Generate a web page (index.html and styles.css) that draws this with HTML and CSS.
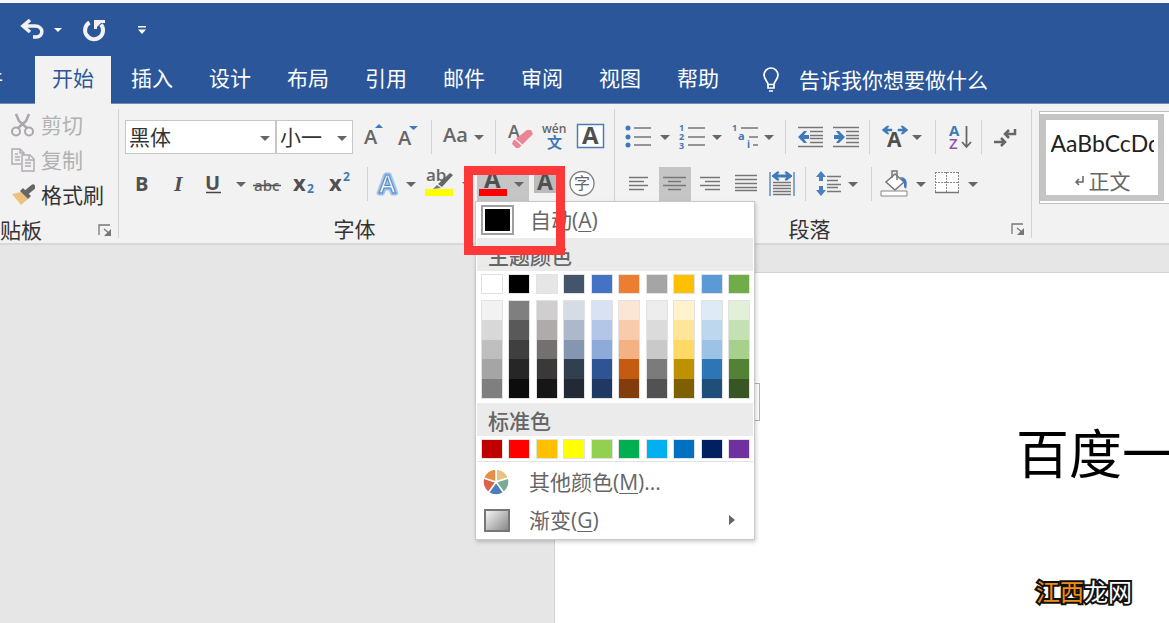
FILE: index.html
```html
<!DOCTYPE html>
<html lang="zh-CN">
<head>
<meta charset="utf-8">
<title>Word</title>
<link rel="stylesheet" href="styles.css">
</head>
<body>
<div class="app">
  <header class="titlebar">
    <button class="qat w40" aria-label="撤消"><svg width="28" height="24" viewBox="0 0 28 24"><path d="M12 2 5 8l7 6M5 8h12c9 0 9 11 1 11h-3" fill="none" stroke="#f2f2f2" stroke-width="3.500"/></svg></button>
    <button class="qat w12" aria-label="撤消列表"><i class="caret"></i></button>
    <button class="qat qat-redo w36" aria-label="重复"><svg width="26" height="26" viewBox="0 0 26 26"><path d="M8.500 5.500a9 9 0 1 0 11.500 2" fill="none" stroke="#f2f2f2" stroke-width="4"/><path d="M13 3h11v3h-4l-4 4v2h-3z" fill="#f2f2f2"/></svg></button>
    <button class="qat qat-more w20" aria-label="自定义"><svg width="10" height="10" viewBox="0 0 10 10"><path d="M1 1h8v1.500H1zM1 4.500h8L5 9z" fill="#fff"/></svg></button>
  </header>
  <nav class="tabs">
    <button class="tab tab-file">文件</button>
    <button class="tab tab-active">开始</button>
    <button class="tab">插入</button>
    <button class="tab">设计</button>
    <button class="tab">布局</button>
    <button class="tab">引用</button>
    <button class="tab">邮件</button>
    <button class="tab">审阅</button>
    <button class="tab">视图</button>
    <button class="tab">帮助</button>
    <button class="tell"><svg width="22" height="28" viewBox="0 0 22 28" fill="none" stroke="#fff" stroke-width="1.700"><path d="M8 18.500c0-3-4-5-4-9.500a7 7 0 0 1 14 0c0 4.500-4 6.500-4 9.500zM8 18v4h6v-4M9 25h4"/></svg>告诉我你想要做什么</button>
  </nav>

  <main class="ribbon">
    <section class="group group-clip">
      <div class="clip-list">
        <button class="clip off"><svg width="24" height="24" viewBox="0 0 24 24" fill="none" stroke="#aaa6aa" stroke-width="2"><circle cx="5" cy="18.500" r="4"/><circle cx="18" cy="18.500" r="4"/><path d="M5 1l3 7 8 7M18 1l-3 7-8 7" stroke-width="2.500"/></svg>剪切</button>
        <button class="clip off"><svg width="24" height="24" viewBox="0 0 24 24" fill="none" stroke="#b3acb3" stroke-width="1.500"><path d="M10 16H1V1h8l4 4v2M9 1v4h4M4 6h3M4 9h5M4 12h5"/><path d="M11 7h8l4 4v12H11zM18 7v5h5M14 12h3M14 15h6M14 18h6" fill="#f2f2f2"/></svg>复制</button>
        <button class="clip"><svg width="24" height="24" viewBox="0 0 24 24"><path d="M1 11l9-2 7 7-7 6z" fill="#ebc27f"/><path d="M9 8l3-3 8 8-3 3z" fill="#666"/><path d="M16 9l6-5" stroke="#666" stroke-width="5" stroke-linecap="round"/></svg>格式刷</button>
      </div>
      <div class="caption"><span class="caption-clip">贴板</span><button class="launch" aria-label="剪贴板设置"><svg width="14" height="12" viewBox="0 0 14 12"><path d="M1 11V1h11M6 5l6 5" fill="none" stroke="#777" stroke-width="1.300"/><path d="M13 5v7H6z" fill="#777"/></svg></button></div>
    </section>

    <section class="group group-font">
      <div class="row">
        <span class="combo combo-font"><select aria-label="字体"><option>黑体</option></select></span>
        <span class="combo combo-size"><select aria-label="字号"><option>小一</option></select></span>
        <button class="tool w36" aria-label="增大字号"><svg width="36" height="34"><text x="11" y="24" class="g" font-size="20">A</text><path d="M22 8h8l-4-4z" fill="#3f79b7"/></svg></button>
        <button class="tool w36" aria-label="减小字号"><svg width="36" height="34"><text x="9" y="25" class="g" font-size="20">A</text><path d="M20 6h9l-4.500 4z" fill="#3f79b7"/></svg></button>
        <span class="sep w12"></span>
        <button class="tool w32" aria-label="更改大小写"><svg width="32" height="34"><text x="6" y="22" class="g" font-size="20">Aa</text></svg></button>
        <button class="tool w20" aria-label="大小写选项"><i class="caret"></i></button>
        <span class="sep w12"></span>
        <button class="tool w36" aria-label="清除格式"><svg width="36" height="34"><text x="7" y="18" class="g" font-size="18">A</text><path d="M12 21 26 10h4l2 4-14 14h-3l-4-4z" fill="#e98594"/><path d="M14 19l7 6" stroke="#f2f2f2" stroke-width="1.500"/></svg></button>
        <button class="tool w36" aria-label="拼音指南"><svg width="36" height="34"><text x="5" y="13" class="g" font-size="12">wén</text><text x="10" y="28" class="cjk" font-size="15" font-weight="bold" fill="#3f79b7">文</text></svg></button>
        <button class="tool w32" aria-label="字符边框"><svg width="32" height="34"><path d="M4.500 4.500h26v23h-26z" fill="#fff" stroke="#4d7db3" stroke-width="1.500"/><text x="9" y="24" class="b" font-size="24">A</text></svg></button>
      </div>
      <div class="row">
        <button class="tool w32" aria-label="加粗"><svg width="32" height="34"><text x="10" y="24" class="b" font-size="20">B</text></svg></button>
        <button class="tool w40" aria-label="倾斜"><svg width="40" height="34"><text x="17" y="24" class="italic" font-size="22">I</text></svg></button>
        <button class="tool w32" aria-label="下划线"><svg width="32" height="34"><text x="8" y="23" class="b" font-size="20">U</text><path d="M9 25.500h15" stroke="#444" stroke-width="1.500"/></svg></button>
        <button class="tool w24" aria-label="下划线选项"><i class="caret"></i></button>
        <button class="tool w28" aria-label="删除线"><svg width="28" height="34"><text x="1" y="24" class="g" font-size="15">abc</text><path d="M0 18.500h28" stroke="#555" stroke-width="1.500"/></svg></button>
        <button class="tool w40" aria-label="下标"><svg width="40" height="34"><text x="12" y="24" class="b" font-size="22">x</text><text x="26" y="26" class="blue" font-size="12">2</text></svg></button>
        <button class="tool w36" aria-label="上标"><svg width="36" height="34"><text x="8" y="24" class="b" font-size="22">x</text><text x="22" y="14" class="blue" font-size="12">2</text></svg></button>
        <span class="sep w20"></span>
        <button class="tool w24" aria-label="文本效果"><svg width="24" height="34"><text x="2" y="26" font-size="25" font-weight="600" class="glow">A</text><text x="2" y="26" font-size="25" font-weight="600" class="fx">A</text></svg></button>
        <button class="tool w20" aria-label="文本效果选项"><i class="caret"></i></button>
        <button class="tool w36" aria-label="突出显示"><svg width="36" height="34"><text x="5" y="14" class="g" font-size="17">ab</text><path d="M29 6l3 2-11 12-4-3z" fill="#666"/><path d="M16 18l4 3-8 1z" fill="#777"/><path d="M4 22h28v7H4z" fill="#ff0"/></svg></button>
        <button class="tool w20" aria-label="突出显示选项"><i class="caret"></i></button>
        <div class="picker">
          <button class="tool on w32" aria-label="字体颜色"><svg width="32" height="34"><text x="7" y="21" class="b" font-size="24">A</text><path d="M2 22h28v7H2z" fill="#f00"/></svg></button>
          <button class="tool on w20" aria-label="字体颜色选项"><i class="caret"></i></button>

          <div class="menu">
            <button class="menu-item item-auto"><i class="auto-chip"></i><span>自动(<u>A</u>)</span></button>
            <h2 class="menu-head">主题颜色</h2>
            <div class="swatches">
              <i style="background:#fff"></i><i style="background:#000"></i><i style="background:#e7e6e6"></i><i style="background:#44546a"></i><i style="background:#4472c4"></i><i style="background:#ed7d31"></i><i style="background:#a5a5a5"></i><i style="background:#ffc000"></i><i style="background:#5b9bd5"></i><i style="background:#70ad47"></i>
            </div>
            <div class="tints">
              <div><i style="background:#f2f2f2"></i><i style="background:#d8d8d8"></i><i style="background:#bfbfbf"></i><i style="background:#a5a5a5"></i><i style="background:#7f7f7f"></i></div>
              <div><i style="background:#7f7f7f"></i><i style="background:#595959"></i><i style="background:#3f3f3f"></i><i style="background:#262626"></i><i style="background:#0c0c0c"></i></div>
              <div><i style="background:#d0cece"></i><i style="background:#aeabaa"></i><i style="background:#757070"></i><i style="background:#3a3838"></i><i style="background:#171616"></i></div>
              <div><i style="background:#d6dce4"></i><i style="background:#adb9ca"></i><i style="background:#8496b0"></i><i style="background:#323f4f"></i><i style="background:#222a35"></i></div>
              <div><i style="background:#d9e2f3"></i><i style="background:#b4c6e7"></i><i style="background:#8eaadb"></i><i style="background:#2f5496"></i><i style="background:#1f3864"></i></div>
              <div><i style="background:#fbe5d5"></i><i style="background:#f7cbac"></i><i style="background:#f4b183"></i><i style="background:#c55a11"></i><i style="background:#833c0b"></i></div>
              <div><i style="background:#ededed"></i><i style="background:#dbdbdb"></i><i style="background:#c9c9c9"></i><i style="background:#7b7b7b"></i><i style="background:#525252"></i></div>
              <div><i style="background:#fff2cc"></i><i style="background:#fee599"></i><i style="background:#ffd965"></i><i style="background:#bf9000"></i><i style="background:#7f6000"></i></div>
              <div><i style="background:#deebf6"></i><i style="background:#bdd7ee"></i><i style="background:#9cc3e5"></i><i style="background:#2e75b5"></i><i style="background:#1e4e79"></i></div>
              <div><i style="background:#e2efd9"></i><i style="background:#c5e0b3"></i><i style="background:#a8d08d"></i><i style="background:#538135"></i><i style="background:#375623"></i></div>
            </div>
            <h2 class="menu-head">标准色</h2>
            <div class="swatches">
              <i style="background:#c00000"></i><i style="background:#f00"></i><i style="background:#ffc000"></i><i style="background:#ff0"></i><i style="background:#92d050"></i><i style="background:#00b050"></i><i style="background:#00b0f0"></i><i style="background:#0070c0"></i><i style="background:#002060"></i><i style="background:#7030a0"></i>
            </div>
            <button class="menu-item item-more"><svg width="28" height="26" viewBox="0 0 28 26" stroke="#fff" stroke-width="1.500"><path d="M13 13V0a13 13 0 0 1 12.400 9z" fill="#e9c384"/><path d="M13 13l12.400-4a13 13 0 0 1-4.800 14.500z" fill="#7aa996"/><path d="M13 13l7.600 10.500a13 13 0 0 1-15.200 0z" fill="#4a7fbb"/><path d="M13 13 5.400 23.500A13 13 0 0 1 .6 9z" fill="#dc6247"/><path d="M13 13 .6 9A13 13 0 0 1 13 0z" fill="#e58f48"/></svg><span>其他颜色(<u>M</u>)...</span></button>
            <button class="menu-item item-more"><i class="grad-chip"></i><span>渐变(<u>G</u>)</span><i class="sub-arrow"></i></button>
          </div>
          <div class="marker"></div>
        </div>
        <button class="tool w32" aria-label="字符底纹"><svg width="32" height="34"><path d="M5 7h25v19H5z" fill="#bbb"/><text x="8" y="23" class="b" font-size="23">A</text></svg></button>
        <button class="tool w40" aria-label="带圈字符"><svg width="40" height="34"><circle cx="21" cy="16.500" r="12" fill="#fff" stroke="#808080" stroke-width="1.300"/><text x="13" y="22" class="cjk" font-size="16" fill="#666">字</text></svg></button>
      </div>
      <div class="caption"><span>字体</span><button class="launch" aria-label="字体设置"></button></div>
    </section>

    <section class="group group-para">
      <div class="row">
        <button class="tool w40" aria-label="项目符号"><svg width="40" height="34"><g fill="#3f79b7"><circle cx="9" cy="8" r="2.500"/><circle cx="9" cy="17" r="2.500"/><circle cx="9" cy="25" r="2.500"/></g><path d="M15 8h17M15 17h17M15 25h17" class="ln"/></svg></button>
        <button class="tool w12" aria-label="项目符号选项"><i class="caret"></i></button>
        <button class="tool w40" aria-label="编号"><svg width="40" height="34"><g class="blue" font-size="9"><text x="8" y="11">1</text><text x="8" y="20">2</text><text x="8" y="29">3</text></g><path d="M17 8h17M17 17h17M17 25h17" class="ln"/></svg></button>
        <button class="tool w12" aria-label="编号选项"><i class="caret"></i></button>
        <button class="tool w40" aria-label="多级列表"><svg width="40" height="34"><g class="blue"><text x="9" y="11" font-size="9">1</text><text x="15" y="20" font-size="11">a</text><text x="24" y="28" font-size="10">i</text></g><path d="M18 8h17M26 17h9M30 25h5" class="ln"/></svg></button>
        <button class="tool w12" aria-label="多级列表选项"><i class="caret"></i></button>
        <span class="sep w20"></span>
        <button class="tool w32" aria-label="减少缩进"><svg width="32" height="34"><path d="M3 7.500h25M15 11.500h13M15 15.500h13M15 18.500h13M15 22.500h13M3 26.500h25" class="ln"/><path d="M3 17l6-6h3l-3 4h5v4H9l3 4H9z" fill="#3f79b7"/></svg></button>
        <button class="tool w36" aria-label="增加缩进"><svg width="36" height="34"><path d="M6 7.500h26M19 11.500h13M19 15.500h13M19 18.500h13M19 22.500h13M6 26.500h26" class="ln"/><path d="M18 17l-6-6H9l3 4H7v4h5l-3 4h3z" fill="#3f79b7"/></svg></button>
        <span class="sep w12"></span>
        <button class="tool w36" aria-label="中文版式"><svg width="36" height="34"><path d="M7 10l5-4h2l-2 3h5v2h-5l2 3h-2zM33 10l-5-4h-2l2 3h-5v2h5l-2 3h2z" fill="#3f79b7" stroke="#3f79b7" stroke-width=".5"/><text x="12" y="27" class="b" font-size="21">A</text></svg></button>
        <button class="tool w12" aria-label="中文版式选项"><i class="caret"></i></button>
        <span class="sep w24"></span>
        <button class="tool w28" aria-label="排序"><svg width="28" height="34"><text x="2" y="16" class="blue" font-size="15">A</text><text x="2" y="29" font-size="15" font-weight="600" fill="#9052ad" class="latin">Z</text><path d="M19.500 6v20M15 22l4.500 5 4.500-5" fill="none" stroke="#666" stroke-width="1.800"/></svg></button>
        <span class="sep w12"></span>
        <button class="tool w40" aria-label="显示编辑标记"><svg width="40" height="34" fill="none" stroke="#666" stroke-width="2.500"><path d="M28 9v5H18M22 10l-4 4 4 4M7 22h10M14 18l4 4-4 4"/></svg></button>
      </div>
      <div class="row">
        <button class="tool w40" aria-label="左对齐"><svg width="40" height="34"><path d="M10 10.500h19M10 14.500h15M10 18.500h19M10 22.500h15" class="ln"/></svg></button>
        <button class="tool on w32" aria-label="居中"><svg width="32" height="34"><path d="M4 10.500h23M9 14.500h13M4 18.500h23M9 22.500h13" class="ln"/></svg></button>
        <button class="tool w36" aria-label="右对齐"><svg width="36" height="34"><path d="M9 10.500h20M14 14.500h15M9 18.500h20M14 22.500h15" class="ln"/></svg></button>
        <button class="tool w36" aria-label="两端对齐"><svg width="36" height="34"><path d="M8 8.500h22M8 12.500h22M8 16.500h22M8 20.500h22M8 23.500h22" class="ln"/></svg></button>
        <button class="tool w36" aria-label="分散对齐"><svg width="36" height="34"><path d="M7 5v24M31 5v24" stroke="#5d8ec4" stroke-width="1.500"/><path d="M9 9l5-4h2l-2 3h10l-2-3h2l5 4-5 4h-2l2-3H14l2 3h-2z" fill="#3f79b7" stroke="#3f79b7"/><path d="M10 15.500h18M10 18.500h18M10 21.500h18M10 24.500h18M10 27.500h18" class="ln"/></svg></button>
        <span class="sep w12"></span>
        <button class="tool w36" aria-label="行距"><svg width="36" height="34"><path d="M10 4l5 6h-3v4H8v-4H5zM10 29l5-6h-3v-4H8v4H5z" fill="#4a7ec0"/><path d="M16 9.500h14M16 13.500h11M16 17.500h14M16 20.500h11M16 24.500h14" class="ln"/></svg></button>
        <button class="tool w12" aria-label="行距选项"><i class="caret"></i></button>
        <span class="sep w24"></span>
        <button class="tool w28" aria-label="底纹"><svg width="28" height="34"><path d="M12 7l9 8-9 8-9-8z" fill="#fff" stroke="#777" stroke-width="1.500"/><path d="M9 11V4h5v9" fill="none" stroke="#777" stroke-width="1.500"/><path d="M17 10c6 0 8 4 6 12l-2-2v-5z" fill="#3f79b7"/><path d="M-2 24h26v5H-2z" fill="#fff" stroke="#888"/></svg></button>
        <button class="tool w20" aria-label="底纹选项"><i class="caret"></i></button>
        <button class="tool w32" aria-label="边框"><svg width="32" height="34"><path d="M4 5h24v21H4z" fill="#fff"/><path d="M4 5.500h24M4 15.500h24M4.500 5v21M15.500 5v21M27.500 5v21" stroke="#888" stroke-dasharray="2 1"/><path d="M4 25.500h24" class="ln"/></svg></button>
        <button class="tool w20" aria-label="边框选项"><i class="caret"></i></button>
      </div>
      <div class="caption"><span>段落</span><button class="launch" aria-label="段落设置"><svg width="14" height="12" viewBox="0 0 14 12"><path d="M1 11V1h11M6 5l6 5" fill="none" stroke="#777" stroke-width="1.300"/><path d="M13 5v7H6z" fill="#777"/></svg></button></div>
    </section>

    <section class="styles">
      <div class="gallery">
        <button class="style-card"><span class="sample">AaBbCcDd</span><span class="style-name"><svg width="10" height="10" viewBox="0 0 10 10"><path d="M9 0v6H2M5 3 2 6l3 3" fill="none" stroke="#666" stroke-width="1.500"/></svg>正文</span></button>
      </div>
    </section>
  </main>

  <div class="workspace">
    <article class="page">
      <span class="float-tag"></span>
      <h1 class="doc-title">百度一下</h1>
    </article>
    <div class="watermark"><b>江西</b>龙网</div>
  </div>
</div>
</body>
</html>
```
FILE: styles.css
```css
* { box-sizing: border-box; }
body {
  margin: 0;
  font: 21px/24px "Open Sans", "Noto Sans CJK SC", sans-serif;
  color: #444;
}
button {
  font: inherit;
  color: inherit;
  background: none;
  border: 0;
  padding: 0;
  margin: 0;
}
.app {
  display: flex;
  flex-direction: column;
  min-height: 100vh;
  overflow: hidden;
  border-top: 3px solid #f8f8f8;
}

.w12 { width: 12px; }
.w20 { width: 20px; }
.w24 { width: 24px; }
.w28 { width: 28px; }
.w32 { width: 32px; }
.w36 { width: 36px; }
.w40 { width: 40px; }

.caret {
  border: 5px solid transparent;
  border-top-color: #666;
  border-bottom: 0;
}

.titlebar {
  display: flex;
  align-items: center;
  height: 53px;
  padding-left: 12px;
  background: #2b579a;
}
.qat {
  display: flex;
  align-items: center;
  justify-content: center;
}
.qat .caret { border-width: 4px 4px 0; border-top-color: #fff; }
.qat-redo { margin-left: 12px; }
.qat-more { margin-left: 20px; }

.tabs {
  display: flex;
  height: 48px;
  background: #2b579a;
  color: #fff;
  border-bottom: 1px solid #6f8cbc;
}
.tab {
  flex: none;
  padding: 0 18px 4px;
  white-space: nowrap;
}
.tab-file {
  display: flex;
  align-items: center;
  justify-content: flex-end;
  width: 35px;
  padding-left: 0;
  padding-right: 32px;
  overflow: hidden;
}
.tab-active {
  height: 48px;
  padding: 0 17px 4px;
  margin-right: 2px;
  background: #f2f2f2;
  color: #2b579a;
}
.tell {
  display: flex;
  align-items: center;
  gap: 17px;
  padding-left: 23px;
  white-space: nowrap;
}

.ribbon {
  position: relative;
  z-index: 1;
  display: flex;
  height: 141px;
  background: #f2f2f2;
  border-bottom: 2px solid #d8d8d8;
}
.group {
  position: relative;
  display: flex;
  flex: none;
  flex-direction: column;
  gap: 13px;
  padding-top: 16px;
}
.group::after {
  content: "";
  position: absolute;
  top: 5px;
  right: 0;
  bottom: 5px;
  border-right: 1px solid #d2d2d2;
}
.group-clip { width: 119px; padding-top: 3px; gap: 6px; }
.group-font { padding-left: 6px; padding-right: 10px; }
.group-para { padding-left: 4px; padding-right: 5px; }

.clip-list { display: flex; flex-direction: column; }
.clip {
  display: flex;
  align-items: center;
  gap: 6px;
  height: 35px;
  padding-left: 11px;
  color: #333;
}
.clip.off { color: #b1b1b1; }

.row { display: flex; height: 34px; }
.tool {
  display: flex;
  flex: none;
  align-items: center;
  justify-content: center;
  height: 34px;
}
.tool svg { display: block; flex: none; overflow: visible; }
.on { background: #c5c5c5; }
.sep { display: flex; justify-content: center; flex: none; }
.sep::before { content: ""; border-left: 1px solid #d2d2d2; }

.combo {
  position: relative;
  flex: none;
  height: 34px;
  background: #fff;
  border: 1px solid #c6c6c6;
}
.combo-font { width: 151px; }
.combo-size { width: 77px; }
.combo select {
  appearance: none;
  width: 100%;
  height: 100%;
  padding: 0 3px;
  border: 0;
  background: none;
  font: inherit;
  color: #333;
}
.combo::after {
  content: "";
  position: absolute;
  top: 15px;
  right: 5px;
  border: 5px solid transparent;
  border-top-color: #666;
  border-bottom: 0;
}

.g, .b, .blue, .latin, .glow, .fx { font-family: "Open Sans", sans-serif; }
.g { fill: #666; font-weight: 600; }
.b { fill: #505050; font-weight: bold; }
.blue { fill: #3f79b7; font-weight: bold; }
.italic { font-family: "Liberation Serif", serif; font-style: italic; font-weight: bold; fill: #505050; }
.cjk { font-family: "Noto Sans CJK SC", sans-serif; }
.glow { fill: none; stroke: #9fc3ea; stroke-width: 5px; stroke-linejoin: round; }
.fx { fill: #fff; stroke: #4a84c4; stroke-width: 1px; }
.ln { fill: none; stroke: #777; stroke-width: 1.5px; }

.caption {
  display: flex;
  align-items: center;
  justify-content: center;
  height: 24px;
  margin-top: 3px;
  color: #333;
}
.caption span { flex: 1; text-align: center; }
.caption .caption-clip { text-align: left; }
.group-clip .caption { margin-top: 0; }
.launch { width: 14px; height: 12px; margin-right: 7px; }
.group-para .launch { margin-right: 2px; }
.group-para .caption span { padding-right: 11px; }
.launch svg { display: block; }

.picker { position: relative; display: flex; z-index: 5; }
.menu {
  position: absolute;
  top: 100%;
  left: -2px;
  width: 280px;
  padding: 0 1px 1px;
  background: #fff;
  border: 1px solid #c9c9c9;
  box-shadow: 1px 2px 4px #0003;
  color: #666;
}
.menu-item {
  display: flex;
  align-items: center;
  gap: 18px;
  width: 100%;
  height: 38px;
  text-align: left;
}
.menu-item u { text-decoration-thickness: 1px; text-underline-offset: 3px; }
.item-auto { height: 36px; padding-left: 4px; gap: 16px; }
.item-more { padding-left: 6px; padding-top: 2px; }
.auto-chip {
  width: 33px;
  height: 30px;
  border: 2px solid #a0a0a0;
  padding: 2px;
  background: #000 content-box;
}
.menu-head {
  height: 33px;
  margin: 0;
  padding: 5px 11px;
  background: #ebebeb;
  font-size: 21px;
  line-height: 24px;
  font-weight: 500;
  font-family: "Noto Sans CJK SC", sans-serif;
}
.swatches, .tints {
  display: flex;
  justify-content: space-between;
  padding: 3px 3px 2px 4px;
}
.swatches i {
  width: 22px;
  height: 20px;
  border: 1px solid #e2e2e2;
}
.swatches:has(+ .item-more) { border-bottom: 1px solid #e2e2e2; }
.tints { padding-top: 4px; padding-bottom: 4px; }
.tints div { width: 22px; border: 1px solid #e2e2e2; }
.tints i { display: block; height: 19px; }
.tints i:nth-child(2n) { height: 20px; }
.grad-chip {
  width: 26px;
  height: 23px;
  margin: 0 1px;
  border: 2px solid #777;
  background: linear-gradient(135deg, #f4f4f4, #888);
}
.sub-arrow {
  margin-left: auto;
  margin-right: 18px;
  border: 5px solid transparent;
  border-left: 6px solid #666;
  border-right: 0;
}
.marker {
  position: absolute;
  top: -1px;
  left: -13px;
  width: 101px;
  height: 89px;
  border: 9px solid #fc3838;
}

.styles { flex: 1; min-width: 0; padding: 7px 0 0 7px; }
.gallery {
  height: 93px;
  padding: 2px 0;
  background: #fff;
  border: 1px solid #bcc1c6;
  border-right: 0;
}
.style-card {
  display: flex;
  flex-direction: column;
  align-items: center;
  justify-content: space-between;
  width: 124px;
  height: 87px;
  padding: 11px 4px 2px;
  border: 6px solid #c5c5c5;
}
.sample {
  width: 103px;
  overflow: hidden;
  white-space: nowrap;
  text-align: left;
  font-family: Lato, sans-serif;
  font-size: 23px;
  color: #222;
}
.style-name { display: flex; align-items: center; gap: 5px; color: #666; }

.workspace {
  position: relative;
  display: flex;
  flex: 1;
  padding-top: 27px;
  background: #e6e6e6;
}
.page {
  position: relative;
  flex: 1;
  min-width: 0;
  margin-left: 554px;
  padding: 154px 0 0 461px;
  background: #fff;
  border: 1px solid #d2d2d2;
  border-width: 1px 0 0 1px;
  overflow: hidden;
}
.doc-title {
  margin: 0;
  font-size: 53px;
  line-height: 54px;
  font-weight: normal;
  color: #000;
  white-space: nowrap;
}
.float-tag {
  position: absolute;
  top: 110px;
  left: 180px;
  width: 25px;
  height: 38px;
  border: 1px solid #b5b5b5;
}
.watermark {
  position: absolute;
  right: 37px;
  bottom: 17px;
  font-size: 24px;
  line-height: 28px;
  font-weight: 400;
  color: #fff;
  -webkit-text-stroke: 4px #111;
  paint-order: stroke fill;
}
.watermark b { font-weight: 400; color: #f28c13; }
```
